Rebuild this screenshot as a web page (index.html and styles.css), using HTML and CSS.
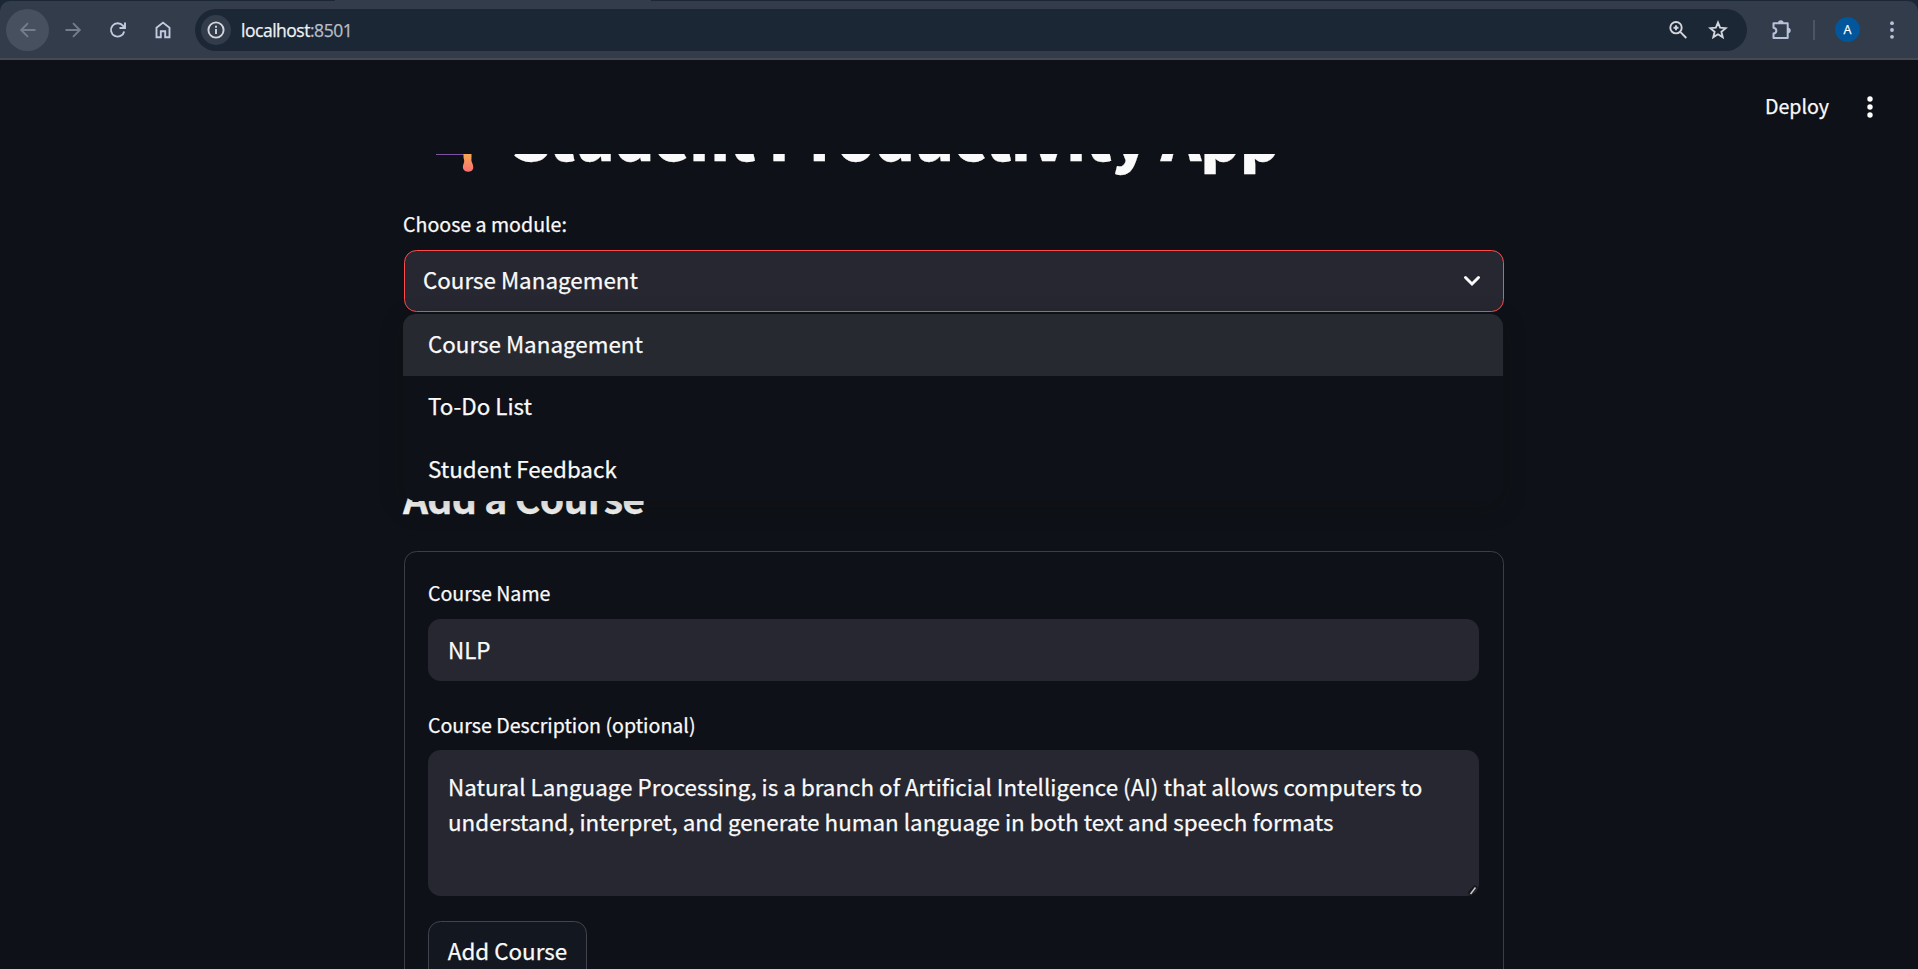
FILE: index.html
```html
<!DOCTYPE html>
<html lang="en">
<head>
<meta charset="utf-8">
<title>Student Productivity App</title>
<link rel="stylesheet" href="styles.css">
</head>
<body>
<div class="browser">
  <div class="toolbar">
    <span class="nav-btn nav-back"><svg width="20" height="20" viewBox="0 0 20 20"><path d="M17.5 10H3.5M10 3.200L3.200 10l6.800 6.800"/></svg></span>
    <span class="nav-btn nav-dim"><svg width="20" height="20" viewBox="0 0 20 20"><path d="M2.500 10h14M10 3.200l6.800 6.800-6.800 6.800"/></svg></span>
    <span class="nav-btn"><svg width="20" height="20" viewBox="0 0 20 20"><path d="M16.200 11.500a6.700 6.700 0 1 1-1.300-5.800l1.600 1.900M17 2.500v5.500h-5.500"/></svg></span>
    <span class="nav-btn"><svg width="20" height="20" viewBox="0 0 20 20"><path d="M3.500 17.300V7.800L10 2.600l6.500 5.200v9.500h-4.300v-6H7.800v6z"/></svg></span>
    <div class="address">
      <span class="site-info"><svg width="20" height="20" viewBox="0 0 20 20"><circle cx="10" cy="10" r="7.600"/><path d="M10 9v5M10 5.800v2"/></svg></span>
      <span class="url">localhost<span class="port">:8501</span></span>
      <svg class="addr-icon zoom-icon" width="20" height="20" viewBox="0 0 20 20"><circle cx="8" cy="7.700" r="5.700"/><path d="M12 11.700l6.300 6.300M8 5.200v5M5.500 7.700h5"/></svg>
      <svg class="addr-icon" width="20" height="20" viewBox="0 0 20 20"><path d="M10 2.600l2.100 5.100 5.500.45-4.200 3.600 1.300 5.400L10 14.250l-4.700 2.900 1.300-5.400-4.200-3.600 5.500-.45z"/></svg>
    </div>
    <svg class="puzzle" width="22" height="22" viewBox="0 0 22 22"><path class="line" d="M2.500 4.200h14.200v14.900H2.500v-4.500c3.800-.6 3.800-5.200 0-5.800z"/><path class="solid" d="M7 4a2.800 2.800 0 0 1 5.600 0zM17 8.800a2.700 2.700 0 0 1 0 5.400z"/></svg>
    <span class="divider"></span>
    <span class="avatar">A</span>
    <svg class="menu-dots" width="4" height="20" viewBox="0 0 4 20"><circle cx="2" cy="3.200" r="1.900"/><circle cx="2" cy="10" r="1.900"/><circle cx="2" cy="16.800" r="1.900"/></svg>
  </div>
</div>

<header class="app-header">
  <span class="deploy">Deploy</span>
  <svg class="app-dots" width="6" height="22" viewBox="0 0 6 22"><circle cx="3" cy="3" r="2.700"/><circle cx="3" cy="11" r="2.700"/><circle cx="3" cy="19" r="2.700"/></svg>
</header>

<main class="app-main">
  <div class="column">
    <h1 class="title">
      <svg class="cap" width="92" height="82" viewBox="0 0 92 82">
        <defs><linearGradient id="tassel" x1="0" y1="0" x2="0" y2="1"><stop offset="0.300" stop-color="#f7b34f"/><stop offset="1" stop-color="#fb6f72"/></linearGradient></defs>
        <path d="M4 36L46 18l42 18-20 22H32z" fill="#533566"/>
        <path d="M32 60.500h35" stroke="#7a53a5" stroke-width="1.200"/>
        <path d="M59.500 48h8v15.500c0 2-.5 2.800.5 5 1 2.400 1.500 4 1.100 6-.8 4-7.800 4.500-9.700.8-1.300-2.600.2-5.200.7-7.300.5-2-.6-3-.6-5z" fill="url(#tassel)"/>
      </svg>
      <span class="title-text">Student Productivity App</span>
    </h1>

    <label class="label">Choose a module:</label>
    <div class="select">
      <span class="select-value">Course Management</span>
      <svg width="18" height="12" viewBox="0 0 18 12"><path d="M2.500 2.500L9 9l6.500-6.500"/></svg>
      <ul class="options">
        <li class="option active">Course Management</li>
        <li class="option">To-Do List</li>
        <li class="option">Student Feedback</li>
      </ul>
    </div>

    <h2 class="subtitle">Add a Course</h2>

    <form class="form">
      <label class="label">Course Name</label>
      <div class="field">NLP</div>
      <label class="label label-next">Course Description (optional)</label>
      <div class="field area">Natural Language Processing, is a branch of Artificial Intelligence (AI) that allows computers to<br>understand, interpret, and generate human language in both text and speech formats
        <svg class="grip" width="10" height="10" viewBox="0 0 10 10"><path class="grip-shade" d="M1 9l7-8"/><path class="grip-line" d="M2.500 9l5-6.500"/></svg>
      </div>
      <button class="button" type="button">Add Course</button>
    </form>
  </div>
</main>
</body>
</html>
```
FILE: styles.css
```css
* {
  box-sizing: border-box;
}

body {
  margin: 0;
  height: 969px;
  display: flex;
  flex-direction: column;
  overflow: hidden;
  background: #0e1117;
  color: #fafafa;
  font-family: "Noto Sans CJK SC", "Noto Sans", sans-serif;
  font-size: 22.400px;
  -webkit-text-stroke: 0.250px currentColor;
}

/* Browser toolbar */
.browser {
  height: 60px;
  flex: none;
  padding-top: 1px;
  background: linear-gradient(90deg, #1b2636 335px, #323c4b 335px, #323c4b 651px, #1b2636 651px);
}

.toolbar {
  height: 59px;
  display: flex;
  align-items: center;
  padding: 0 20px 0 6px;
  background: #323c4b;
  border-bottom: 2px solid #47494e;
  border-radius: 10px 10px 0 0;
}

.nav-btn {
  width: 43px;
  height: 42px;
  margin-right: 2px;
  display: flex;
  align-items: center;
  justify-content: center;
  border-radius: 50%;
}

.nav-btn svg,
.site-info svg,
.addr-icon {
  fill: none;
  stroke: #c0cbdf;
  stroke-width: 1.900;
}

.nav-back {
  background: #47505e;
}

.nav-back svg,
.nav-dim svg {
  stroke: #737d8b;
}

.address {
  width: 1552px;
  height: 42px;
  margin-left: 9px;
  padding: 0 19px 0 6px;
  display: flex;
  align-items: center;
  border-radius: 21px;
  background: #1c2736;
}

.site-info {
  width: 30px;
  height: 30px;
  display: flex;
  align-items: center;
  justify-content: center;
  border-radius: 50%;
  background: #323c4b;
}

.site-info svg,
.addr-icon {
  stroke: #d3d6dc;
}

.url {
  margin-left: 10px;
  flex: 1;
  font: 17.500px "Open Sans", sans-serif;
  letter-spacing: -0.480px;
  color: #f0f2f5;
}

.port {
  color: #b8bdc5;
}

.zoom-icon {
  margin-right: 20px;
}

.puzzle {
  margin-left: 24px;
}

.puzzle .line {
  fill: none;
  stroke: #b7c3da;
  stroke-width: 2;
  stroke-linejoin: round;
}

.puzzle .solid {
  fill: #b7c3da;
}

.divider {
  width: 2px;
  height: 20px;
  margin-left: 20px;
  background: #4a5668;
}

.avatar {
  width: 25px;
  height: 25px;
  margin-left: 20px;
  border-radius: 50%;
  background: #02569b;
  color: #fff;
  font: 12.500px/25px "Open Sans", sans-serif;
  text-align: center;
}

.menu-dots {
  margin-left: auto;
  margin-right: 4px;
  fill: #b7c3da;
}

/* App header */
.app-header {
  height: 94px;
  flex: none;
  display: flex;
  align-items: center;
  justify-content: flex-end;
  padding-right: 45px;
}

.deploy {
  font-size: 19.600px;
  line-height: 30px;
  padding-bottom: 2px;
  margin-right: 38px;
}

.app-dots {
  fill: #fff;
}

/* Scrolled content, cut by the header edge */
.app-main {
  flex: 1;
  min-height: 0;
  overflow: hidden;
}

.column {
  width: 1100px;
  margin: -60px 0 0 404px;
}

.title {
  margin: 0 0 32px;
  height: 82px;
  display: flex;
  font-size: 61.500px;
  line-height: 82px;
  font-weight: 900;
  letter-spacing: -0.960px;
  white-space: nowrap;
}

.title-text {
  margin-left: 16px;
}

.label {
  display: block;
  margin-left: -1px;
  font-size: 19.600px;
  line-height: 32px;
  height: 32px;
}

.select {
  position: relative;
  height: 62px;
  margin-top: 10px;
  padding: 0 22px 4px 18px;
  display: flex;
  align-items: center;
  justify-content: space-between;
  border: 1px solid #ff4b4b;
  border-radius: 12.500px;
  background: #262730;
}

.select svg {
  margin-top: 3px;
  fill: none;
  stroke: #fafafa;
  stroke-width: 3;
  stroke-linecap: round;
}

.options {
  position: absolute;
  left: -2px;
  top: 63px;
  width: 1100px;
  height: 187px;
  margin: 0;
  padding: 0;
  list-style: none;
  border-radius: 12.500px;
  background: #0e1117;
  box-shadow: 0 6px 25px rgba(20, 18, 8, 0.220);
  overflow: hidden;
}

.option {
  height: 62.400px;
  padding-left: 25px;
  line-height: 59.600px;
}

.option.active {
  background: #262930;
}

.subtitle {
  margin: 155px 0 0 -1px;
  height: 60px;
  font-size: 39.200px;
  line-height: 60px;
  font-weight: 700;
  letter-spacing: -0.780px;
}

.form {
  margin-top: 24px;
  height: 480px;
  padding: 25px 24px 0;
  border: 1px solid #3c3e41;
  border-radius: 12.500px;
}

.field {
  height: 62px;
  width: 1051px;
  margin: 10px 0 0 -1px;
  padding-left: 20px;
  line-height: 60px;
  border-radius: 12.500px;
  background: #262730;
}

.label-next {
  margin-top: 28px;
}

.area {
  position: relative;
  height: 146px;
  margin-top: 9px;
  padding-top: 19px;
  line-height: 35px;
  white-space: nowrap;
}

.grip {
  position: absolute;
  right: 1px;
  bottom: 1px;
  fill: none;
}

.grip-shade {
  stroke: #17181c;
  stroke-width: 4;
}

.grip-line {
  stroke: #c9c9cb;
  stroke-width: 1.500;
}

.button {
  display: block;
  width: 159px;
  height: 62px;
  margin: 25px 0 0 -1px;
  padding: 0 0 4px;
  border: 1px solid #41444c;
  border-radius: 12.500px;
  background: #131720;
  color: #fafafa;
  font: inherit;
}
```
